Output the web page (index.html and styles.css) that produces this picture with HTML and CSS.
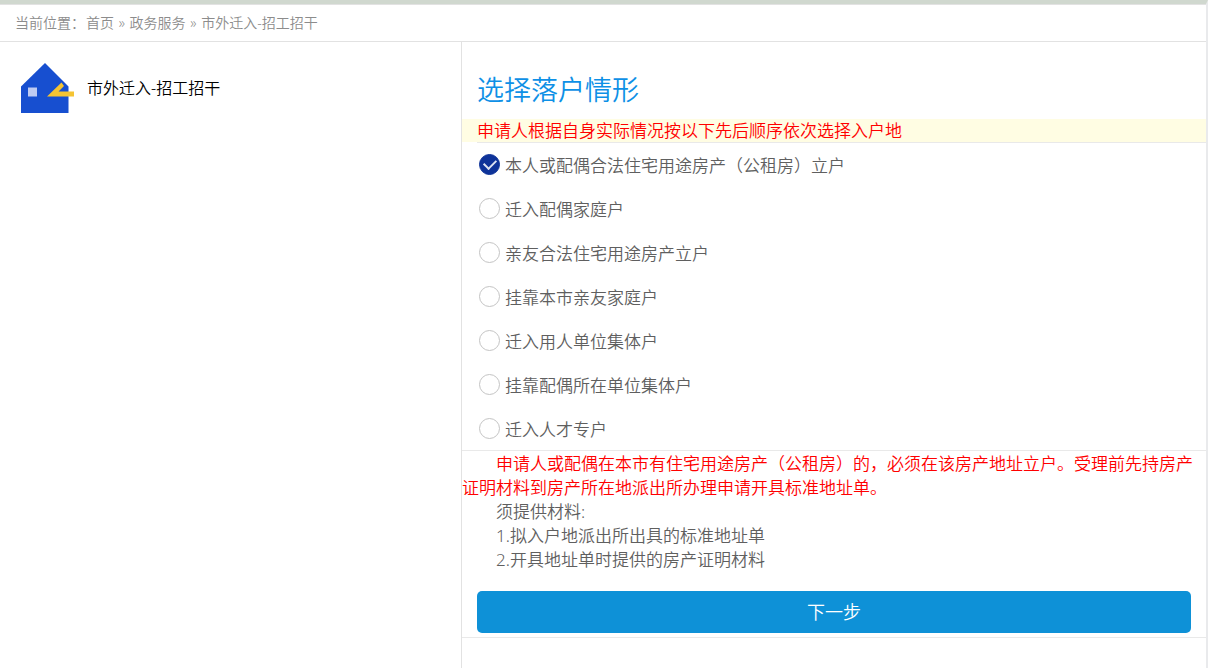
FILE: index.html
```html
<!DOCTYPE html>
<html lang="zh-CN">
<head>
<meta charset="utf-8">
<meta name="viewport" content="width=device-width, initial-scale=1">
<title>市外迁入-招工招干</title>
<link rel="stylesheet" href="styles.css">
</head>
<body>
<div class="page">
  <nav class="breadcrumb" aria-label="当前位置">当前位置：<a href="#">首页</a> » <a href="#">政务服务</a> » <a href="#">市外迁入-招工招干</a></nav>
  <div class="columns">
    <aside class="service">
      <svg class="service-icon" viewBox="0 0 54 50" aria-hidden="true">
        <path d="M0 23.500 24 0 47.500 23.500V50H0Z" fill="#174fd0"/>
        <path d="M7 24.500h9v9H7Z" fill="#becbf2"/>
        <path d="M26 33.500 40.500 19.500 43 23 37.500 28.500H53V33.500Z" fill="#f5c433"/>
      </svg>
      <span class="service-name">市外迁入-招工招干</span>
    </aside>
    <main class="panel">
      <h1 class="panel-title">选择落户情形</h1>
      <p class="notice">申请人根据自身实际情况按以下先后顺序依次选择入户地</p>
      <form>
        <div class="options" role="radiogroup" aria-label="选择落户情形">
          <label class="option"><input class="option-radio" type="radio" name="case" checked>本人或配偶合法住宅用途房产（公租房）立户</label>
          <label class="option"><input class="option-radio" type="radio" name="case">迁入配偶家庭户</label>
          <label class="option"><input class="option-radio" type="radio" name="case">亲友合法住宅用途房产立户</label>
          <label class="option"><input class="option-radio" type="radio" name="case">挂靠本市亲友家庭户</label>
          <label class="option"><input class="option-radio" type="radio" name="case">迁入用人单位集体户</label>
          <label class="option"><input class="option-radio" type="radio" name="case">挂靠配偶所在单位集体户</label>
          <label class="option"><input class="option-radio" type="radio" name="case">迁入人才专户</label>
        </div>
        <div class="details">
          <p class="detail detail-warning">申请人或配偶在本市有住宅用途房产（公租房）的，必须在该房产地址立户。受理前先持房产证明材料到房产所在地派出所办理申请开具标准地址单。</p>
          <p class="detail">须提供材料:</p>
          <p class="detail">1.拟入户地派出所出具的标准地址单</p>
          <p class="detail">2.开具地址单时提供的房产证明材料</p>
        </div>
        <div class="actions">
          <button class="next" type="button">下一步</button>
        </div>
      </form>
    </main>
  </div>
</div>
</body>
</html>
```
FILE: styles.css
```css
* {
  box-sizing: border-box;
}

body {
  margin: 0;
  background: #fff;
  color: #5f5f5f;
  font-family: "Noto Sans", "Noto Sans CJK SC DemiLight", "Noto Sans CJK SC", sans-serif;
  font-size: 17px;
  font-weight: 350;
}

.page {
  display: flex;
  flex-direction: column;
  min-height: 100vh;
  border-top: 4px solid #d0d8cf;
  border-right: 2px solid #e9eaec;
}

.breadcrumb {
  padding: 6px 15px;
  border-top: 1px solid #e2e2e2;
  border-bottom: 1px solid #e2e2e2;
  color: #8c8c8c;
  font-size: 14px;
  line-height: 24px;
}

.breadcrumb a {
  padding: 0 1px;
  color: inherit;
  text-decoration: none;
}

.columns {
  display: grid;
  flex: 1;
  grid-template-columns: 13fr 21fr;
}

.service {
  display: flex;
  align-items: center;
  align-self: start;
  gap: 12px;
  padding: 21px;
  color: #000;
  font-size: 16px;
}

.service-icon {
  width: 54px;
  height: 50px;
}

.service-name {
  padding-bottom: 2px;
}

.panel {
  border-left: 1px solid #e2e2e2;
}

.panel-title {
  margin: 0;
  padding: 28px 15px 9px;
  color: #0e90e6;
  font-size: 27px;
  font-weight: 350;
  line-height: 40px;
}

.notice {
  margin: 0;
  padding: 0 15px;
  background: #fffde3;
  color: #f00;
  line-height: 23px;
}

.options {
  margin-left: 15px;
}

.option {
  display: flex;
  align-items: center;
  gap: 5px;
  height: 44px;
}

.option:first-child {
  border-top: 1px solid #e9e9e9;
}

.option-radio {
  flex: none;
  width: 21px;
  height: 21px;
  margin: 0 0 0 2px;
  border: 1px solid #c4c4c4;
  border-radius: 50%;
  appearance: none;
}

.option-radio:checked {
  display: grid;
  place-items: center;
  border-color: #0e3399;
  background: #0e3399;
}

.option-radio:checked::before {
  content: "";
  width: 10px;
  height: 6px;
  margin-bottom: 3px;
  border: solid #dfe4f2;
  border-width: 0 0 2px 2px;
  transform: rotate(-45deg);
}

.details {
  padding: 1px 0 19px;
  border-top: 1px solid #e9e9e9;
}

.detail {
  margin: 0;
  line-height: 24px;
  text-indent: 2em;
}

.detail-warning {
  color: #f00;
}

.actions {
  padding: 0 15px 4px;
  border-bottom: 1px solid #e9e9e9;
}

.next {
  display: block;
  width: 100%;
  padding: 8px;
  border: 0;
  border-radius: 5px;
  background: #0e91d7;
  color: #fff;
  font: inherit;
  font-size: 18px;
  line-height: 26px;
}
```
